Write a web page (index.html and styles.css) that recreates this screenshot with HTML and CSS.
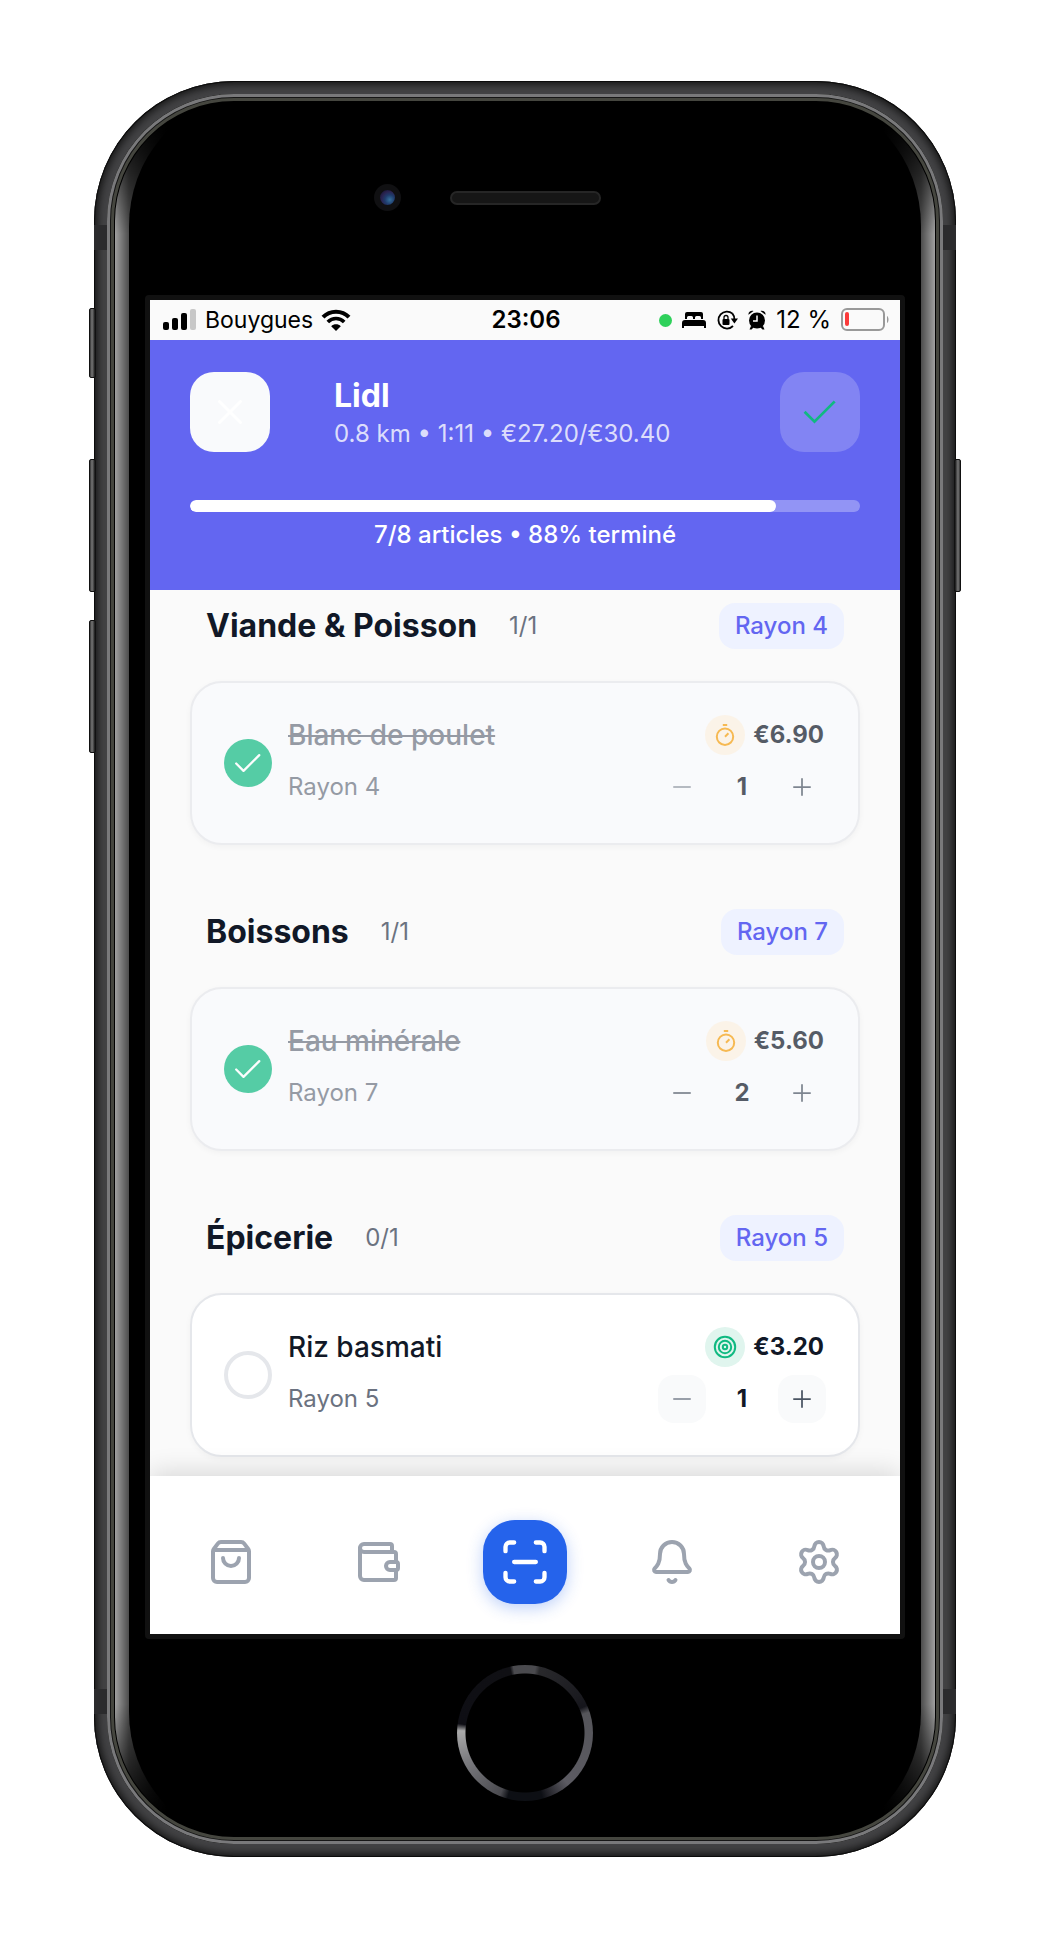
FILE: index.html
```html
<!DOCTYPE html>
<html lang="fr">
<head>
<meta charset="utf-8">
<meta name="viewport" content="width=device-width, initial-scale=1">
<title>Lidl – liste de courses</title>
<link rel="stylesheet" href="styles.css">
</head>
<body>
<svg class="sprite" aria-hidden="true">
  <symbol id="check" viewBox="0 0 512 512"><path d="M416 144 192 368 88 264"/></symbol>
  <symbol id="minus" viewBox="0 0 512 512"><path d="M400 256H112"/></symbol>
  <symbol id="plus" viewBox="0 0 512 512"><path d="M256 112v288M400 256H112"/></symbol>
  <symbol id="timer" viewBox="0 0 28 28"><circle cx="14" cy="15.7" r="8.2"/><path d="M14 15.7l3.4-3.4M11.8 4h4.4"/></symbol>
  <symbol id="target" viewBox="0 0 28 28"><circle cx="14" cy="14" r="10.2"/><circle cx="14" cy="14" r="6.2"/><circle cx="14" cy="14" r="2.2"/></symbol>
</svg>
<div class="phone">
  <span class="side side-mute"></span>
  <span class="side side-up"></span>
  <span class="side side-down"></span>
  <span class="side side-power"></span>
  <span class="band band-top"></span>
  <span class="band band-bottom"></span>
  <div class="rim">
    <div class="face">
      <div class="sensors">
        <span class="camera"></span>
        <span class="speaker"></span>
      </div>
      <div class="screen">
        <div class="status">
          <div class="status-left">
            <svg width="34" height="22" viewBox="0 0 34 22"><rect y="13" width="6" height="8" rx="2"/><rect x="9" y="9" width="6" height="12" rx="2"/><rect x="18" y="4" width="6" height="17" rx="2"/><rect x="27" width="6" height="21" rx="2" fill="#c8c8c8"/></svg>
            <span class="carrier">Bouygues</span>
            <svg width="30" height="22" viewBox="0 0 30 22"><path d="M2 8.2C9 .9 21 .9 28 8.2" fill="none" stroke="#000" stroke-width="4"/><path d="M6.8 13c4.600-4.700 11.800-4.700 16.400 0" fill="none" stroke="#000" stroke-width="3.600"/><path d="M15 22l-4.800-4.800c2.700-2.600 6.900-2.600 9.600 0z"/></svg>
          </div>
          <time class="clock">23:06</time>
          <div class="status-right">
            <span class="live"></span>
            <svg width="24" height="18" viewBox="0 0 24 18"><path d="M3 8V3a2 2 0 0 1 2-2h14a2 2 0 0 1 2 2v5h-2V6.500a1.500 1.500 0 0 0-1.500-1.500h-3A1.500 1.500 0 0 0 13 6.500V8h-2V6.500A1.500 1.500 0 0 0 9.500 5h-3A1.500 1.500 0 0 0 5 6.500V8z"/><path d="M0 17v-5a3 3 0 0 1 3-3h18a3 3 0 0 1 3 3v5h-2v-2H2v2z"/></svg>
            <svg width="22" height="20" viewBox="0 0 22 20"><path d="M16.500 3.600A8.500 8.500 0 1 0 17 16" fill="none" stroke="#000" stroke-width="1.800"/><path d="M16.300 3.400a8.500 8.500 0 0 1 2 6" fill="none" stroke="#000" stroke-width="1.800"/><path d="M14.800 8.500H22l-3.600 5z"/><rect x="6.500" y="9" width="7" height="6" rx="1"/><path d="M8 9V7.500a2 2 0 0 1 4 0V9" fill="none" stroke="#000" stroke-width="1.300"/></svg>
            <svg width="18" height="20" viewBox="0 0 18 20"><circle cx="9" cy="10.500" r="8"/><path d="M.5 4.800C0 2 3 0 5.500 1zM17.500 4.800C18 2 15 0 12.500 1zM3 16l-1.500 3.500h2L6 17zM15 16l1.500 3.500h-2L12 17z"/><path d="M9 5.500V11H5" fill="none" stroke="#fff" stroke-width="1.500"/></svg>
            <span>12 %</span>
            <svg width="48" height="24" viewBox="0 0 48 24"><rect x="1" y="1" width="42" height="21" rx="5" fill="none" stroke="#999" stroke-width="2"/><rect x="4" y="4" width="4" height="14" rx="2" fill="#fb3a3a"/><path d="M46 8c2 1 2 6 0 7z" fill="#999"/></svg>
          </div>
        </div>
        <header class="header">
          <div class="header-row">
            <button class="square close" type="button" aria-label="Fermer"><svg width="48" height="48" viewBox="0 0 512 512"><path d="M368 368 144 144M368 144 144 368"/></svg></button>
            <div class="store">
              <h1>Lidl</h1>
              <p>0.8 km • 1:11 • €27.20/€30.40</p>
            </div>
            <button class="square done" type="button" aria-label="Terminer"><svg width="44" height="44"><use href="#check"/></svg></button>
          </div>
          <div class="progress" role="progressbar" aria-valuenow="88" aria-valuemin="0" aria-valuemax="100" aria-label="Progression"><div class="progress-fill" style="width:87.5%"></div></div>
          <p class="progress-label">7/8 articles • 88% terminé</p>
        </header>
        <main class="list">
          <section>
            <div class="section-head"><h2>Viande &amp; Poisson</h2><span class="count">1/1</span><span class="aisle">Rayon 4</span></div>
            <div class="card card-done">
              <div class="tick"><input type="checkbox" id="i1" checked><svg width="36" height="36" aria-hidden="true"><use href="#check"/></svg></div>
              <label class="name" for="i1">Blanc de poulet</label>
              <div class="price"><span class="tag tag-timer"><svg width="28" height="28"><use href="#timer"/></svg></span><span>€6.90</span></div>
              <span class="place">Rayon 4</span>
              <div class="qty"><button type="button" aria-label="Moins"><svg class="faint" width="28" height="28"><use href="#minus"/></svg></button><span>1</span><button type="button" aria-label="Plus"><svg width="28" height="28"><use href="#plus"/></svg></button></div>
            </div>
          </section>
          <section>
            <div class="section-head"><h2>Boissons</h2><span class="count">1/1</span><span class="aisle">Rayon 7</span></div>
            <div class="card card-done">
              <div class="tick"><input type="checkbox" id="i2" checked><svg width="36" height="36" aria-hidden="true"><use href="#check"/></svg></div>
              <label class="name" for="i2">Eau minérale</label>
              <div class="price"><span class="tag tag-timer"><svg width="28" height="28"><use href="#timer"/></svg></span><span>€5.60</span></div>
              <span class="place">Rayon 7</span>
              <div class="qty"><button type="button" aria-label="Moins"><svg width="28" height="28"><use href="#minus"/></svg></button><span>2</span><button type="button" aria-label="Plus"><svg width="28" height="28"><use href="#plus"/></svg></button></div>
            </div>
          </section>
          <section>
            <div class="section-head"><h2>Épicerie</h2><span class="count">0/1</span><span class="aisle">Rayon 5</span></div>
            <div class="card">
              <div class="tick"><input type="checkbox" id="i3"></div>
              <label class="name" for="i3">Riz basmati</label>
              <div class="price"><span class="tag tag-target"><svg width="28" height="28"><use href="#target"/></svg></span><span>€3.20</span></div>
              <span class="place">Rayon 5</span>
              <div class="qty"><button type="button" aria-label="Moins"><svg class="faint" width="28" height="28"><use href="#minus"/></svg></button><span>1</span><button type="button" aria-label="Plus"><svg width="28" height="28"><use href="#plus"/></svg></button></div>
            </div>
          </section>
        </main>
        <nav class="tabs">
          <a href="#" aria-label="Courses"><svg width="48" height="48" viewBox="0 0 24 24"><path d="M16 10a4 4 0 0 1-8 0M3.103 6.034h17.794M3.400 5.467a2 2 0 0 0-.4 1.200V20a2 2 0 0 0 2 2h14a2 2 0 0 0 2-2V6.667a2 2 0 0 0-.4-1.200l-2-2.667A2 2 0 0 0 17 2H7a2 2 0 0 0-1.600.8z"/></svg></a>
          <a href="#" aria-label="Budget"><svg width="48" height="48" viewBox="0 0 24 24"><path d="M19 7V4a1 1 0 0 0-1-1H5a2 2 0 0 0 0 4h15a1 1 0 0 1 1 1v4h-3a2 2 0 0 0 0 4h3a1 1 0 0 0 1-1v-2a1 1 0 0 0-1-1"/><path d="M3 5v14a2 2 0 0 0 2 2h15a1 1 0 0 0 1-1v-4"/></svg></a>
          <a href="#" aria-label="Scanner" class="scan"><svg width="52" height="52" viewBox="0 0 24 24"><path d="M3 7V5a2 2 0 0 1 2-2h2M17 3h2a2 2 0 0 1 2 2v2M21 17v2a2 2 0 0 1-2 2h-2M7 21H5a2 2 0 0 1-2-2v-2M7 12h10"/></svg></a>
          <a href="#" aria-label="Alertes"><svg width="48" height="48" viewBox="0 0 24 24"><path d="M10.268 21a2 2 0 0 0 3.464 0M3.262 15.326A1 1 0 0 0 4 17h16a1 1 0 0 0 .74-1.673C19.410 13.956 18 12.499 18 8A6 6 0 0 0 6 8c0 4.499-1.411 5.956-2.738 7.326"/></svg></a>
          <a href="#" aria-label="Réglages"><svg width="48" height="48" viewBox="0 0 24 24"><path d="M9.671 4.136a2.340 2.340 0 0 1 4.659 0 2.340 2.340 0 0 0 3.319 1.915 2.340 2.340 0 0 1 2.330 4.033 2.340 2.340 0 0 0 0 3.831 2.340 2.340 0 0 1-2.330 4.033 2.340 2.340 0 0 0-3.319 1.915 2.340 2.340 0 0 1-4.659 0 2.340 2.340 0 0 0-3.320-1.915 2.340 2.340 0 0 1-2.330-4.033 2.340 2.340 0 0 0 0-3.831A2.340 2.340 0 0 1 6.350 6.051a2.340 2.340 0 0 0 3.319-1.915"/><circle cx="12" cy="12" r="3"/></svg></a>
        </nav>
      </div>
      <div class="home"></div>
    </div>
  </div>
</div>
</body>
</html>
```
FILE: styles.css
```css
* { box-sizing: border-box; }
body {
  margin: 0;
  padding: 81px 16px 77px;
  background: #fff;
  color: #111827;
  font: 400 24px/30px Inter, "Liberation Sans", sans-serif;
}
h1, h2, p { margin: 0; }
svg { display: block; flex: none; }
button { border: 0; padding: 0; font: inherit; cursor: pointer; }
.sprite { position: absolute; width: 0; height: 0; }

/* Phone body */
.phone {
  position: relative;
  max-width: 862px;
  margin: 0 auto;
  padding: 13px;
  border-radius: 140px;
  background: #434345;
  box-shadow: inset 0 0 0 1px #0c0c0c, inset 0 0 9px 3px #111;
}
.side {
  position: absolute;
  left: -5px;
  width: 7px;
  height: 133px;
  border-radius: 2px;
  border: 1px solid #111;
  background: linear-gradient(90deg, #333, #777 40%, #3a3a3a 80%, #111);
}
.side-mute { top: 227px; height: 70px; }
.side-up { top: 378px; }
.side-down { top: 539px; }
.side-power { top: 378px; left: auto; right: -5px; transform: scaleX(-1); }
.band {
  position: absolute;
  left: 0;
  right: 0;
  height: 25px;
  border: solid #2b2b2d;
  border-width: 0 16px;
}
.band-top { top: 144px; }
.band-bottom { bottom: 143px; }
.rim {
  position: relative;
  padding: 8px 22px;
  border-radius: 127px;
  background:
    linear-gradient(#000 20px, transparent 140px, transparent calc(100% - 140px), #000 calc(100% - 20px)),
    linear-gradient(90deg, #a0a0a0 8px, #4c4c4c 22px, #000 60px, #000 calc(100% - 60px), #4c4c4c calc(100% - 22px), #a0a0a0 calc(100% - 8px));
}
.rim::after {
  content: "";
  position: absolute;
  inset: 0;
  border-radius: inherit;
  box-shadow: inset 0 0 0 3px #79797b, inset 0 0 0 4px #161616, inset 0 0 0 7px #45463f, inset 0 0 0 8px #000;
  pointer-events: none;
}
.face {
  padding: 82px 16px 35px;
  border-radius: 110px / 124px;
  background: #000;
}
.sensors {
  display: grid;
  grid-template-columns: 1fr 151px 1fr;
  align-items: center;
  margin-bottom: 84px;
}
.camera {
  justify-self: end;
  width: 27px;
  height: 27px;
  margin-right: 49px;
  border-radius: 50%;
  border: 6px solid #101012;
  background: radial-gradient(circle at 65% 65%, #35709c, #1f3b6b 35%, #2a2350 60%, #0a0f20);
}
.speaker {
  grid-column: 2;
  height: 14px;
  border-radius: 7px;
  border: 2px solid #262626;
  background: #161616;
}
.screen {
  border: 5px solid #111;
  border-radius: 4px;
  background: #fafafa;
}
.home {
  width: 136px;
  height: 136px;
  margin: 26px auto 0;
  border-radius: 50%;
  background:
    radial-gradient(circle, #000 59px, transparent 60px),
    conic-gradient(#4a4a4e 9deg, #29292c 13deg, #1b1b20 55deg, #15151b 66deg, #55555a 72deg, #5c5b62 140deg, #202026 160deg, #0d0f14 165deg, #0d0f14 195deg, #4a4a4f 202deg, #7c7c80 245deg, #aaa 272deg, #0e0e14 278deg, #101014 347deg, #4a4a4e 350deg);
}

/* Status bar */
.status {
  display: grid;
  grid-template-columns: 1fr auto 1fr;
  align-items: center;
  height: 40px;
  padding: 0 11px 0 13px;
  color: #000;
}
.status-left, .status-right { display: flex; align-items: center; gap: 10px; }
.status-left { gap: 8px; }
.status-right { justify-content: flex-end; }
.carrier { font-size: 23px; }
.clock { font-weight: 600; }
.live { width: 13px; height: 13px; border-radius: 50%; background: #2fd15b; }

/* Trip header */
.header { padding: 32px 40px 40px; background: #6366f1; color: #fff; }
.header-row { display: flex; align-items: flex-end; }
.square {
  display: grid;
  place-items: center;
  width: 80px;
  height: 80px;
  border-radius: 24px;
  fill: none;
  stroke-width: 32px;
}
.close { background: #f9fafc; stroke: #fff; stroke-linecap: round; }
.done { background: rgba(255, 255, 255, .2); stroke: #10b981; stroke-linecap: square; }
.store { flex: 1; margin-left: 64px; }
.store h1 { font-size: 32px; line-height: 40px; font-weight: 700; }
.store p { line-height: 36px; color: rgba(255, 255, 255, .8); }
.progress { height: 12px; margin: 48px 0 8px; border-radius: 6px; background: rgba(255, 255, 255, .3); overflow: hidden; }
.progress-fill { height: 12px; border-radius: 6px; background: #fff; }
.progress-label { text-align: center; font-weight: 500; }

/* Shopping list */
.list { display: grid; gap: 64px; padding: 13px 40px 19px; }
.section-head { display: flex; align-items: center; gap: 32px; padding: 0 16px; margin-bottom: 32px; }
.section-head h2 { font-size: 32px; line-height: 46px; font-weight: 700; }
.count { color: #6b7280; }
.aisle {
  margin-left: auto;
  padding: 8px 16px;
  border-radius: 16px;
  background: #eef2ff;
  color: #6366f1;
  font-weight: 500;
}
.card {
  display: grid;
  grid-template-columns: 48px 1fr auto;
  grid-template-rows: 40px 48px;
  gap: 8px 16px;
  align-items: center;
  padding: 32px;
  border: 2px solid #e5e7eb;
  border-radius: 32px;
  background: #fff;
  box-shadow: 0 2px 6px rgba(0, 0, 0, .04);
}
.tick { grid-row: 1 / 3; display: grid; place-items: center; }
.tick > * { grid-area: 1 / 1; }
.tick input {
  appearance: none;
  width: 48px;
  height: 48px;
  margin: 0;
  border: 4px solid #e5e7eb;
  border-radius: 50%;
}
.tick input:checked { border: 0; background: #10b981; }
.tick svg { fill: none; stroke: #fff; stroke-width: 32px; stroke-linecap: round; stroke-linejoin: round; pointer-events: none; }
.name { font-size: 28px; line-height: 36px; font-weight: 500; }
.place { color: #6b7280; }
.price { display: flex; align-items: center; justify-content: flex-end; gap: 8px; padding-right: 2px; font-weight: 700; }
.tag { display: grid; place-items: center; width: 40px; height: 40px; border-radius: 50%; fill: none; }
.tag-timer { background: #fdf1e0; stroke: #f59e0b; stroke-width: 2px; }
.tag-target { background: #e0f5ee; stroke: #10b981; stroke-width: 2px; }
.qty {
  display: grid;
  grid-template-columns: 48px 72px 48px;
  align-items: center;
  justify-content: end;
  text-align: center;
  font-weight: 700;
}
.qty button { display: grid; place-items: center; height: 48px; border-radius: 16px; background: #f9fafb; }
.qty svg { fill: none; stroke: #4b5563; stroke-width: 32px; stroke-linecap: square; }
.qty .faint { stroke: #8b929d; }
.card-done { background: #f9fafc; border-color: #ebecef; }
.card-done > * { opacity: .7; }
.card-done .name { color: #6b7280; text-decoration: line-through; }
.card-done button { background: transparent; }

/* Bottom tabs */
.tabs {
  display: grid;
  grid-template-columns: repeat(5, 1fr);
  place-items: center;
  padding: 44px 8px 30px;
  background: #fff;
  box-shadow: 0 -4px 24px rgba(0, 0, 0, .14);
  clip-path: inset(-32px 0 0);
}
.tabs svg { fill: none; stroke: #9ca3af; stroke-width: 2px; stroke-linecap: round; stroke-linejoin: round; }
.scan {
  display: grid;
  place-items: center;
  width: 84px;
  height: 84px;
  border-radius: 32px;
  background: #2563eb;
  box-shadow: 0 4px 16px rgba(37, 99, 235, .3);
}
.tabs .scan svg { stroke: #fff; }
```
